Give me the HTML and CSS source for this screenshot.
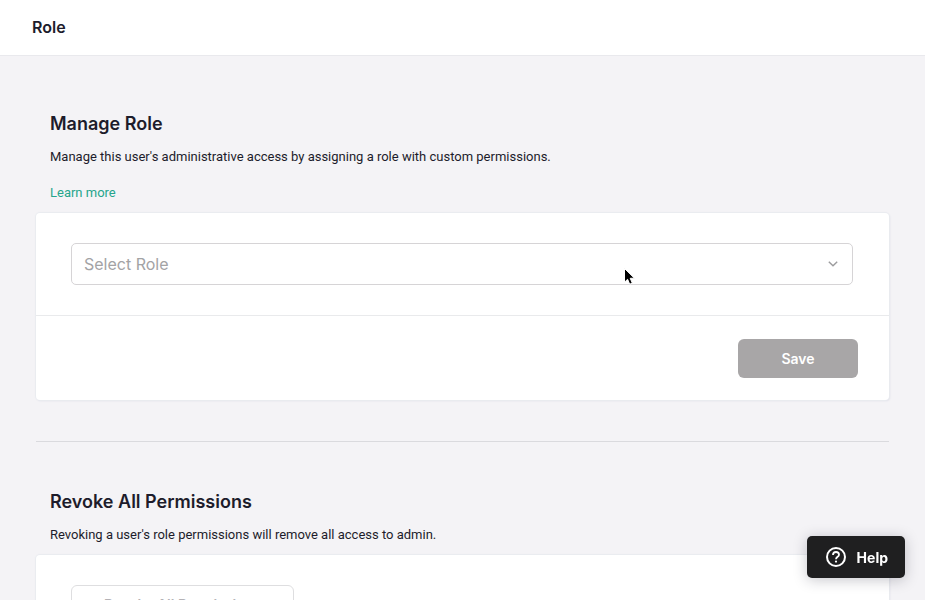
FILE: index.html
```html
<!DOCTYPE html>
<html lang="en">
<head>
  <meta charset="UTF-8">
  <meta name="viewport" content="width=device-width, initial-scale=1">
  <title>Role</title>
  <link rel="stylesheet" href="styles.css">
</head>
<body>
  <header class="topbar">
    <h1>Role</h1>
  </header>

  <main class="content">
    <section class="section">
      <div class="intro">
        <h2>Manage Role</h2>
        <p>Manage this user's administrative access by assigning a role with custom permissions.</p>
        <p class="more"><a href="#">Learn more</a></p>
      </div>
      <form class="card">
        <div class="card-body">
          <div class="select-wrap">
            <select class="select" aria-label="Role">
              <option value="">Select Role</option>
            </select>
            <svg class="chevron" width="10" height="6" viewBox="0 0 10 6" fill="none" stroke="#9c9c9e" stroke-width="1.4" aria-hidden="true">
              <path d="M0.8 0.7 L5 4.8 L9.2 0.7"/>
            </svg>
          </div>
        </div>
        <div class="card-footer">
          <button type="button" class="btn-save" disabled>Save</button>
        </div>
      </form>
    </section>

    <hr class="divider">

    <section class="section">
      <div class="intro">
        <h2>Revoke All Permissions</h2>
        <p>Revoking a user's role permissions will remove all access to admin.</p>
      </div>
      <div class="card">
        <div class="card-body">
          <button type="button" class="btn-revoke" disabled>Revoke All Permissions</button>
        </div>
      </div>
    </section>
  </main>

  <button type="button" class="help">
    <svg width="22" height="22" viewBox="0 0 22 22" fill="none" stroke="#fff" stroke-width="2" aria-hidden="true">
      <circle cx="11" cy="11" r="9"/>
      <path d="M8 8.9 C8 7 9.3 6 11 6 C12.7 6 14 7.1 14 8.7 C14 10.8 11 10.9 11 13.3" stroke-width="1.8"/>
      <circle cx="11" cy="15.6" r="1.1" fill="#fff" stroke="none"/>
    </svg>
    Help
  </button>

  <svg class="cursor" width="14" height="20" viewBox="0 0 14 20" aria-hidden="true">
    <path d="M1.5 1.5 L1.5 15.2 L4.6 12.3 L6.7 17.2 L9.3 16.1 L7.2 11.3 L11.4 11.2 Z" fill="#000" stroke="#fff" stroke-width="1"/>
  </svg>
</body>
</html>
```

FILE: styles.css
```css
* {
  box-sizing: border-box;
}
body {
  margin: 0;
  font-family: Inter, "Liberation Sans", sans-serif;
  font-size: 13px;
  line-height: 20px;
  color: #1d1c2b;
  background: #f4f3f6;
}
h1, h2, p {
  margin: 0;
}
button, select {
  font-family: inherit;
}
.topbar {
  padding: 15px 32px 16px;
  background: #fff;
  border-bottom: 1px solid #e9e9ed;
}
.topbar h1 {
  font-size: 16px;
  line-height: 24px;
  font-weight: 600;
}
.content {
  padding: 54px 36px 40px;
}
.intro {
  padding: 0 14px 10px;
}
.intro h2 {
  margin-bottom: 9px;
  font-size: 18px;
  line-height: 28px;
  font-weight: 600;
}
.intro p {
  font-family: Roboto, "Liberation Sans", sans-serif;
}
.intro .more {
  margin-top: 16px;
}
.more a {
  color: #25a58c;
  text-decoration: none;
}
.card {
  background: #fff;
  border-radius: 4px;
  box-shadow: 0 0 1px 1px #e9ebf0, 1px 1px 2px #e0e0e8;
}
.card-body {
  padding: 30px 36px 30px 35px;
}
.card-footer {
  display: flex;
  justify-content: flex-end;
  padding: 23px 31px 22px;
  border-top: 1px solid #e9eaec;
}
.select-wrap {
  position: relative;
}
.select {
  display: block;
  width: 100%;
  height: 42px;
  padding: 0 36px 0 12px;
  font-size: 16px;
  color: #a3a3a5;
  background: #fff;
  border: 1px solid #d6d4d6;
  border-radius: 5px;
  appearance: none;
}
.chevron {
  position: absolute;
  top: 18px;
  right: 15px;
  pointer-events: none;
}
.btn-save {
  width: 120px;
  height: 39px;
  font-size: 14px;
  font-weight: 600;
  color: #fff;
  background: #a8a6a7;
  border: 0;
  border-radius: 6px;
}
.divider {
  height: 1px;
  margin: 41px 0 46px;
  background: #dadade;
  border: 0;
}
.btn-revoke {
  height: 38px;
  padding: 0 32px;
  font-size: 14px;
  font-weight: 600;
  color: #b4b2b6;
  background: #fff;
  border: 1px solid #dedee0;
  border-radius: 6px;
}
.help {
  position: fixed;
  right: 20px;
  bottom: 22px;
  display: flex;
  align-items: center;
  gap: 10px;
  height: 42px;
  padding: 0 17px 0 18px;
  font-size: 14px;
  font-weight: 700;
  color: #fff;
  background: #1f1f20;
  border: 0;
  border-radius: 5px;
  box-shadow: 0 2px 14px rgba(30, 30, 50, 0.25);
}
.cursor {
  position: absolute;
  left: 623px;
  top: 267px;
  pointer-events: none;
}
```
